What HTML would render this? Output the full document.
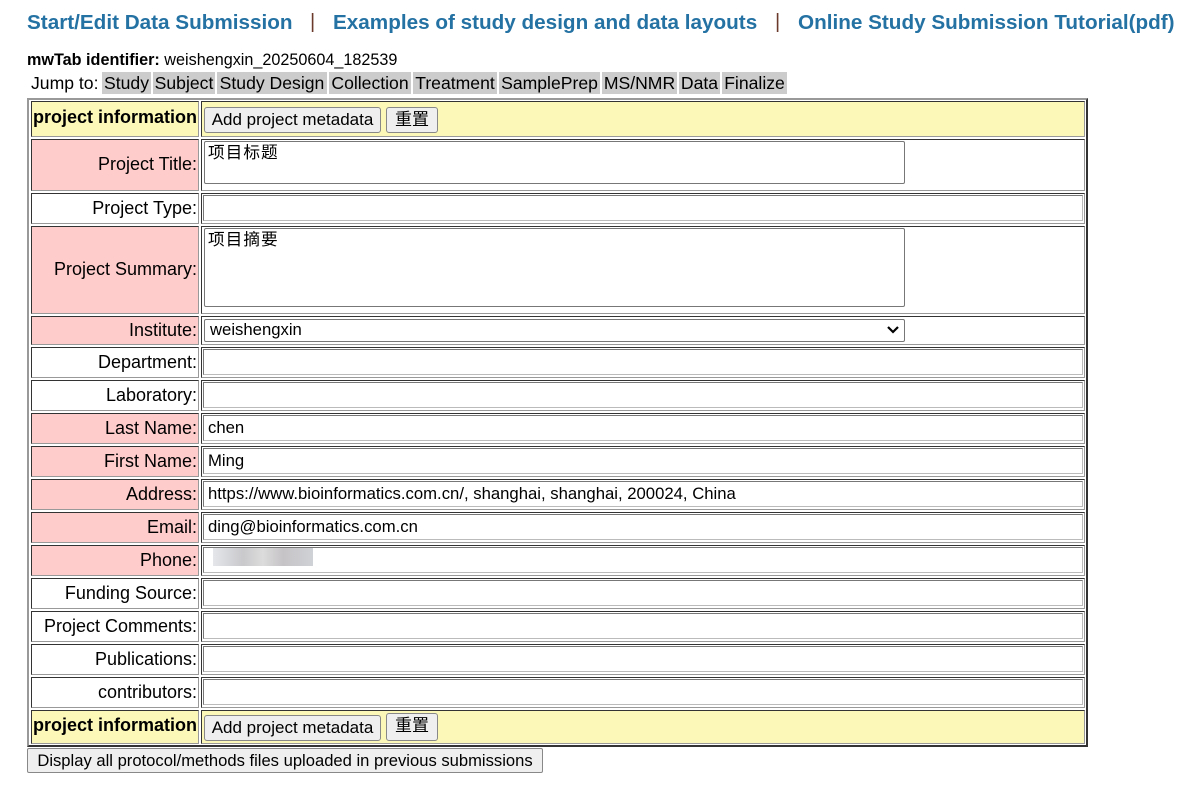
<!DOCTYPE html>
<html><head><meta charset="utf-8"><style>
*{box-sizing:border-box}
body{margin:0;width:1187px;height:790px;background:#fff;font-family:"Liberation Sans",Arial,"Noto Sans CJK SC",sans-serif;color:#000;position:relative;overflow:hidden}
.a{position:absolute;white-space:nowrap}
.nav{font-weight:bold;font-size:20.7px;color:#2471a3;top:11px}
.sep{font-size:20px;color:#6b3a2a;top:11px}
.j{background:#ccc;font-size:17.6px;top:72px;height:22px;line-height:22px;text-align:center;overflow:hidden}
.outer{position:absolute;left:27px;top:98px;width:1061px;height:649px;border:2px solid;border-color:#999 #333 #333 #999}
.c{position:absolute;border:1px solid;border-color:#333 #999 #999 #333}
.lab{left:31px;width:168px;text-align:right;font-size:18px;padding-right:1px;padding-bottom:1px;display:flex;align-items:center;justify-content:flex-end}
.val{left:201px;width:884px}
.pink{background:#fcc}
.yel{background:#fbf8b8}
.inp{position:absolute;left:203px;width:880px;height:26px;border:1px solid;border-color:#777 #bbb #bbb #777;background:#fff;font-size:16.7px;padding-left:4px;line-height:23px}
.ta{position:absolute;left:204px;width:701px;border:1px solid #777;border-radius:2px;background:#fff;font-size:16.7px;padding:1px 3px;line-height:20px;letter-spacing:1px}
.btn{position:absolute;height:26px;border:1px solid #888;border-radius:3px;background:#efefef;font-size:17px;line-height:24px;text-align:center}
</style></head><body>
<div class="a nav" style="left:27px">Start/Edit Data Submission</div>
<div class="a sep" style="left:310px">|</div>
<div class="a nav" style="left:333px">Examples of study design and data layouts</div>
<div class="a sep" style="left:775px">|</div>
<div class="a nav" style="left:798px">Online Study Submission Tutorial(pdf)</div>
<div class="a" style="left:27px;top:51px;font-size:16.2px"><b>mwTab identifier:</b> weishengxin_20250604_182539</div>
<div class="a" style="left:31px;top:72px;font-size:17.6px;line-height:22px">Jump to:</div>
<div class="a j" style="left:102px;width:49px">Study</div>
<div class="a j" style="left:153px;width:62px">Subject</div>
<div class="a j" style="left:217px;width:110px">Study Design</div>
<div class="a j" style="left:329px;width:82px">Collection</div>
<div class="a j" style="left:413px;width:84px">Treatment</div>
<div class="a j" style="left:499px;width:101px">SamplePrep</div>
<div class="a j" style="left:602px;width:75px">MS/NMR</div>
<div class="a j" style="left:679px;width:41px">Data</div>
<div class="a j" style="left:722px;width:65px">Finalize</div>
<div class="outer"></div>

<div class="c lab yel" style="top:101px;height:36px;font-weight:bold;font-size:18px;padding-bottom:4px">project information</div>
<div class="c val yel" style="top:101px;height:36px"></div>
<div class="btn" style="left:204px;top:107px;width:177px">Add project metadata</div>
<div class="btn" style="left:386px;top:107px;width:52px">重置</div>

<div class="c lab pink" style="top:139px;height:52px">Project Title:</div><div class="c val" style="top:139px;height:52px"></div>
<div class="ta" style="top:141px;height:43px">项目标题</div>
<div class="c lab" style="top:193px;height:31px">Project Type:</div><div class="c val" style="top:193px;height:31px"></div>
<div class="inp" style="top:195px"></div>
<div class="c lab pink" style="top:226px;height:88px">Project Summary:</div><div class="c val" style="top:226px;height:88px"></div>
<div class="ta" style="top:228px;height:79px">项目摘要</div>
<div class="c lab pink" style="top:316px;height:29px">Institute:</div><div class="c val" style="top:316px;height:29px"></div>
<div class="ta" style="top:319px;height:23px;line-height:18px;padding-left:5px;letter-spacing:0">weishengxin</div>
<svg style="position:absolute;left:886px;top:325px" width="14" height="10"><path d="M2 2 L7 7 L12 2" stroke="#000" stroke-width="2.2" fill="none"/></svg>

<div class="c lab" style="top:347px;height:31px">Department:</div><div class="c val" style="top:347px;height:31px"></div><div class="inp" style="top:349px"></div>
<div class="c lab" style="top:380px;height:31px">Laboratory:</div><div class="c val" style="top:380px;height:31px"></div><div class="inp" style="top:382px"></div>
<div class="c lab pink" style="top:413px;height:31px">Last Name:</div><div class="c val" style="top:413px;height:31px"></div><div class="inp" style="top:415px">chen</div>
<div class="c lab pink" style="top:446px;height:31px">First Name:</div><div class="c val" style="top:446px;height:31px"></div><div class="inp" style="top:448px">Ming</div>
<div class="c lab pink" style="top:479px;height:31px">Address:</div><div class="c val" style="top:479px;height:31px"></div><div class="inp" style="top:481px">https://www.bioinformatics.com.cn/, shanghai, shanghai, 200024, China</div>
<div class="c lab pink" style="top:512px;height:31px">Email:</div><div class="c val" style="top:512px;height:31px"></div><div class="inp" style="top:514px">ding@bioinformatics.com.cn</div>
<div class="c lab pink" style="top:545px;height:31px">Phone:</div><div class="c val" style="top:545px;height:31px"></div><div class="inp" style="top:547px"></div>
<div class="a" style="left:213px;top:548px;width:100px;height:18px;background:linear-gradient(90deg,#e4e6ea,#c9c9cc 30%,#dcdcdc 50%,#c6c3c6 70%,#cfd2d6)"></div>
<div class="c lab" style="top:578px;height:31px">Funding Source:</div><div class="c val" style="top:578px;height:31px"></div><div class="inp" style="top:580px"></div>
<div class="c lab" style="top:611px;height:31px">Project Comments:</div><div class="c val" style="top:611px;height:31px"></div><div class="inp" style="top:613px"></div>
<div class="c lab" style="top:644px;height:31px">Publications:</div><div class="c val" style="top:644px;height:31px"></div><div class="inp" style="top:646px"></div>
<div class="c lab" style="top:677px;height:31px">contributors:</div><div class="c val" style="top:677px;height:31px"></div><div class="inp" style="top:679px"></div>

<div class="c lab yel" style="top:710px;height:34px;font-weight:bold;font-size:18px;padding-bottom:4px">project information</div>
<div class="c val yel" style="top:710px;height:34px"></div>
<div class="btn" style="left:204px;top:715px;width:177px">Add project metadata</div>
<div class="btn" style="left:386px;top:713px;width:52px;height:28px">重置</div>

<div class="btn" style="left:27px;top:748px;width:516px;height:25px;line-height:23px;border-radius:2px;font-size:16.6px">Display all protocol/methods files uploaded in previous submissions</div>
</body></html>
